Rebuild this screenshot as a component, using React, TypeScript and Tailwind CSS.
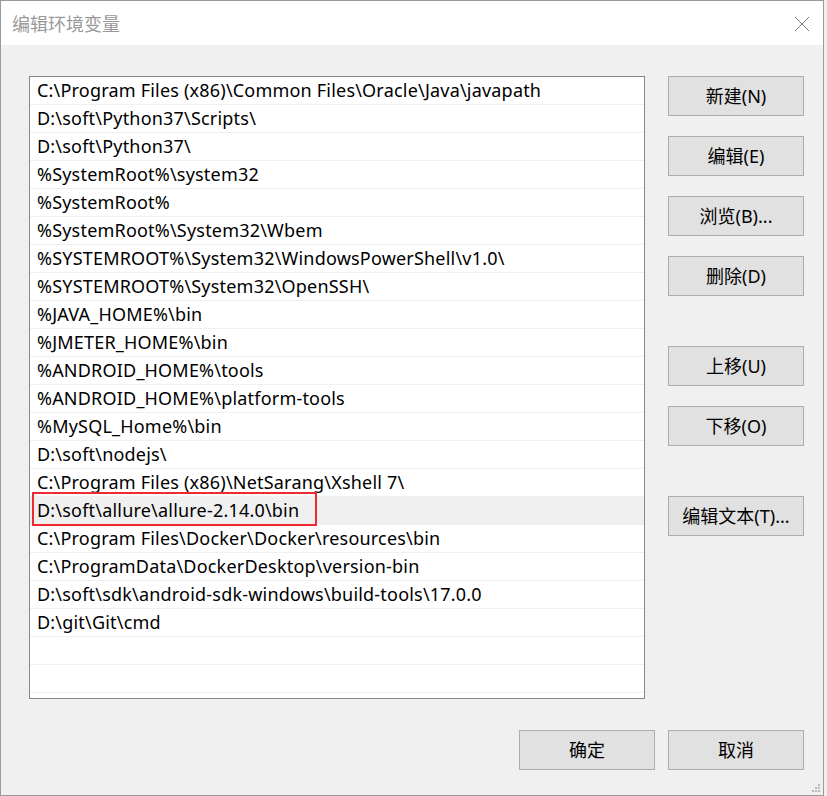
import React from "react";

const paths = [
  "C:\\Program Files (x86)\\Common Files\\Oracle\\Java\\javapath",
  "D:\\soft\\Python37\\Scripts\\",
  "D:\\soft\\Python37\\",
  "%SystemRoot%\\system32",
  "%SystemRoot%",
  "%SystemRoot%\\System32\\Wbem",
  "%SYSTEMROOT%\\System32\\WindowsPowerShell\\v1.0\\",
  "%SYSTEMROOT%\\System32\\OpenSSH\\",
  "%JAVA_HOME%\\bin",
  "%JMETER_HOME%\\bin",
  "%ANDROID_HOME%\\tools",
  "%ANDROID_HOME%\\platform-tools",
  "%MySQL_Home%\\bin",
  "D:\\soft\\nodejs\\",
  "C:\\Program Files (x86)\\NetSarang\\Xshell 7\\",
  "D:\\soft\\allure\\allure-2.14.0\\bin",
  "C:\\Program Files\\Docker\\Docker\\resources\\bin",
  "C:\\ProgramData\\DockerDesktop\\version-bin",
  "D:\\soft\\sdk\\android-sdk-windows\\build-tools\\17.0.0",
  "D:\\git\\Git\\cmd",
  "",
  "",
];

const SELECTED = 15;

const font = "font-['Noto_Sans','Noto_Sans_CJK_SC',sans-serif]";

const Btn = ({ label, className = "" }: { label: string; className?: string }) => (
  <button
    className={`w-[136px] h-[40px] bg-[#e1e1e1] border border-[#adadad] text-[18px] text-[#000] ${font} ${className}`}
  >
    {label}
  </button>
);

export default function App() {
  return (
    <div className="w-[827px] h-[796px] bg-[#f0f0f0] overflow-hidden">
      <div className={`relative w-[824px] h-[796px] border border-[#9a9a9a] bg-[#f0f0f0] flex flex-col ${font}`}>
        {/* title bar */}
        <div className="h-[44px] bg-white flex items-center justify-between pl-[11px] pr-[13px] shrink-0">
          <span className="text-[18px] text-[#999] font-['Noto_Sans_CJK_SC',sans-serif]">编辑环境变量</span>
          <svg width="16" height="16" viewBox="0 0 16 16" className="mt-[1px]">
            <path d="M1 1L15 15M15 1L1 15" stroke="#777" strokeWidth="1" />
          </svg>
        </div>

        {/* body */}
        <div className="flex pl-[28px] pt-[31px] gap-[23px]">
          <div className="relative w-[616px] h-[623px] bg-white border border-[#828790] overflow-hidden">
            {paths.map((p, i) => (
              <div
                key={i}
                className={`h-[28px] border-b border-[#f0f0f0] pl-[7px] flex items-center text-[18px] tracking-[0.2px] text-black whitespace-nowrap ${
                  i === SELECTED ? "bg-[#f0f0f0]" : ""
                }`}
              >
                {p}
              </div>
            ))}
            {/* annotation */}
            <div className="absolute left-[2px] top-[415px] w-[285px] h-[34px] border-2 border-[#ee2b33]" />
          </div>

          <div className="flex flex-col">
            <Btn label="新建(N)" />
            <Btn label="编辑(E)" className="mt-[20px]" />
            <Btn label="浏览(B)..." className="mt-[20px]" />
            <Btn label="删除(D)" className="mt-[20px]" />
            <Btn label="上移(U)" className="mt-[50px]" />
            <Btn label="下移(O)" className="mt-[20px]" />
            <Btn label="编辑文本(T)..." className="mt-[50px]" />
          </div>
        </div>

        <div className="flex justify-end gap-[13px] pr-[19px] mt-[31px]">
          <Btn label="确定" />
          <Btn label="取消" />
        </div>

        {/* resize grip */}
        <svg width="10" height="10" viewBox="0 0 10 10" className="absolute right-[2px] bottom-[2px]">
          <g fill="#b8b8b8">
            <rect x="7" y="1" width="2" height="2" />
            <rect x="4" y="4" width="2" height="2" />
            <rect x="7" y="4" width="2" height="2" />
            <rect x="1" y="7" width="2" height="2" />
            <rect x="4" y="7" width="2" height="2" />
            <rect x="7" y="7" width="2" height="2" />
          </g>
        </svg>
      </div>
    </div>
  );
}
